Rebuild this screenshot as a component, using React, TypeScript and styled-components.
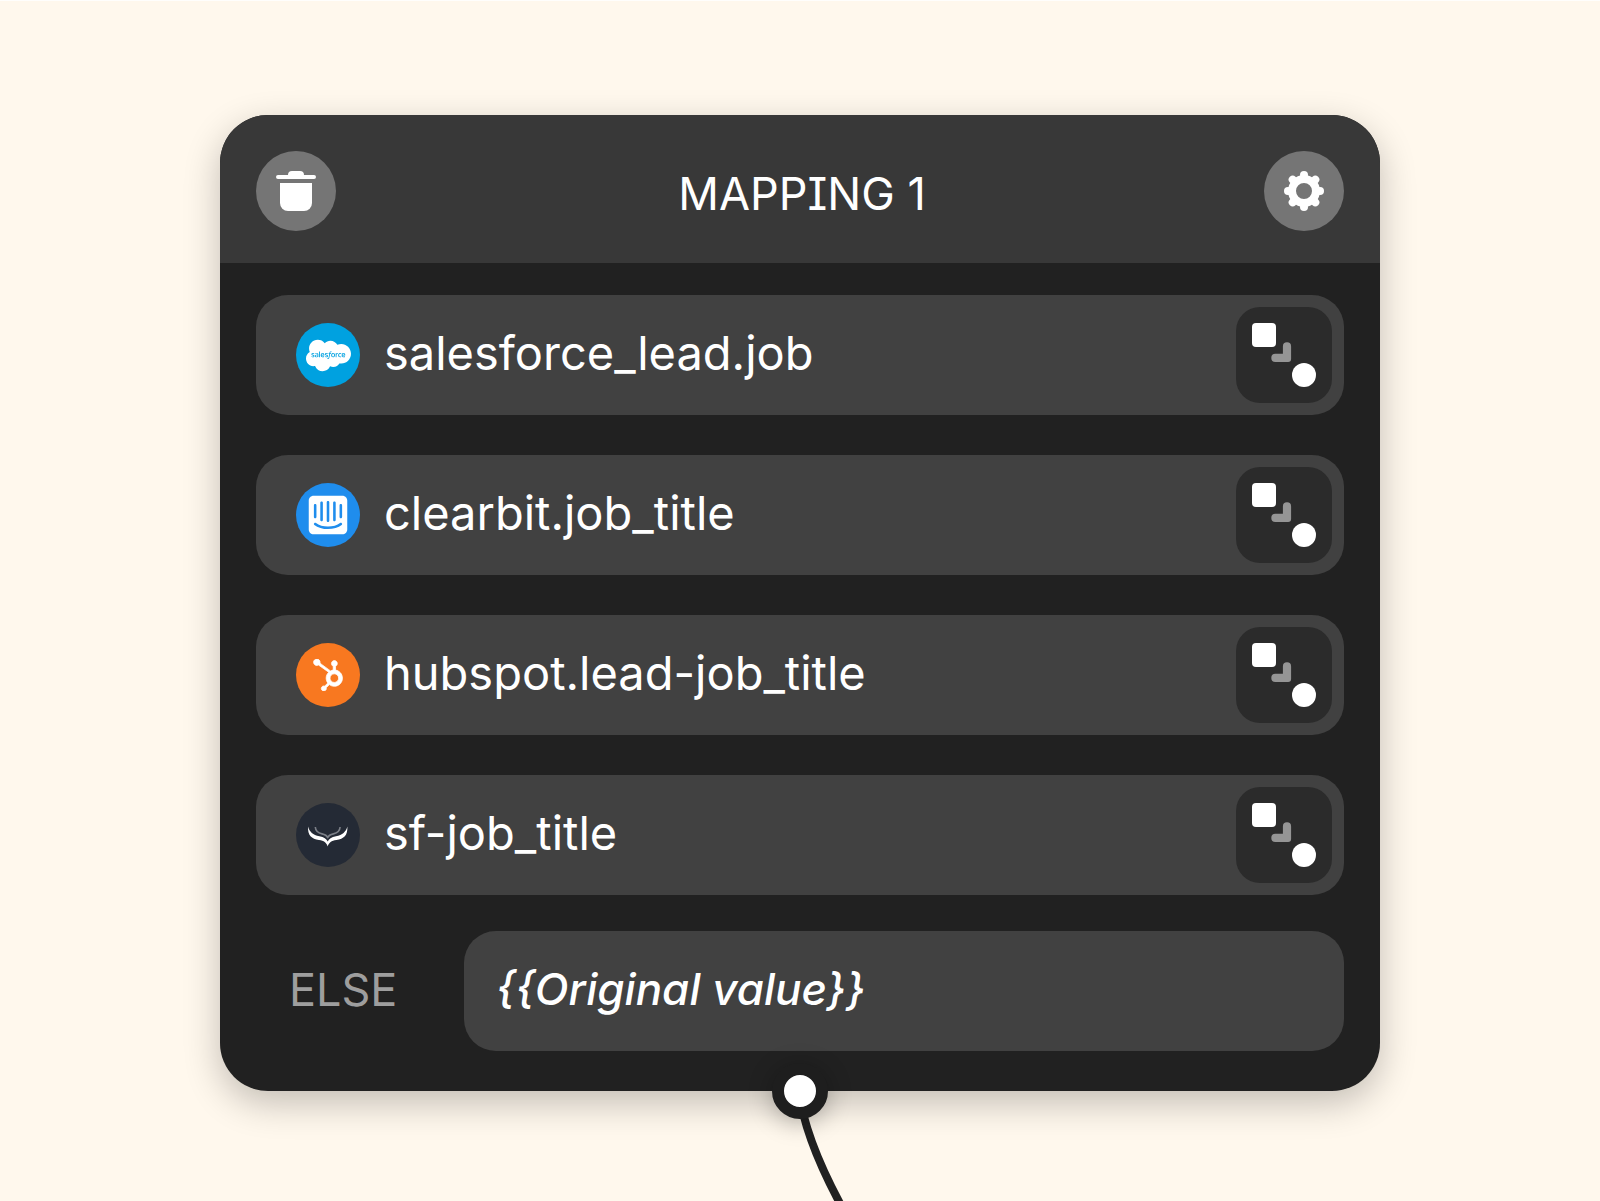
import React from "react";
import styled, { createGlobalStyle } from "styled-components";
import { FaHubspot, FaIntercom, FaSalesforce } from "react-icons/fa";

const GlobalStyle = createGlobalStyle`
  *, *::before, *::after { box-sizing: border-box; }
  body { margin: 0; background: #fff8ed; }
  button, input { font: inherit; color: inherit; }
`;

const Page = styled.main`
  min-height: 100vh;
  display: flex;
  flex-direction: column;
  align-items: center;
  padding: 114px 32px 0;
  border-top: 1px solid #fffefc;
  overflow: hidden;
  color: #fff;
  font-family: Inter, "Liberation Sans", sans-serif;
`;

const Card = styled.section`
  position: relative;
  width: 100%;
  max-width: 1160px;
  border-radius: 48px;
  background: #212121;
  box-shadow: 0 12px 36px rgba(0, 0, 0, 0.24);
`;

const Header = styled.header`
  display: flex;
  align-items: center;
  justify-content: space-between;
  padding: 36px 36px 32px;
  border-radius: 48px 48px 0 0;
  background: #383838;
`;

const Title = styled.h1`
  margin: 0;
  padding: 6px 0 0 4px;
  font-size: 45px;
  line-height: 56px;
  font-weight: 400;
  font-feature-settings: "cv08";
`;

const RoundButton = styled.button`
  display: grid;
  place-items: center;
  width: 80px;
  height: 80px;
  padding: 0;
  border: 0;
  border-radius: 50%;
  background: #757575;
  cursor: pointer;
`;

const Body = styled.div`
  display: flex;
  flex-direction: column;
  gap: 36px;
  padding: 32px 36px 40px;
`;

const SourceList = styled.ul`
  display: flex;
  flex-direction: column;
  gap: 40px;
  margin: 0;
  padding: 0;
  list-style: none;
`;

const SourceRow = styled.li`
  display: flex;
  align-items: center;
  gap: 24px;
  padding: 12px 12px 12px 40px;
  border-radius: 32px;
  background: #414141;
`;

const AppBadge = styled.span<{ $color: string }>`
  display: grid;
  place-items: center;
  flex: none;
  width: 64px;
  height: 64px;
  border-radius: 50%;
  background: ${(p) => p.$color};
`;

const SourceName = styled.span`
  flex: 1;
  padding-bottom: 4px;
  font-size: 47px;
  line-height: 56px;
`;

const MapButton = styled.button`
  width: 96px;
  height: 96px;
  padding: 0;
  border: 0;
  border-radius: 24px;
  background: #2b2b2b;
  cursor: pointer;
  svg { display: block; }
`;

const ElseRow = styled.div`
  display: grid;
  grid-template-columns: 172px 1fr;
  column-gap: 36px;
  align-items: center;
`;

const ElseLabel = styled.label`
  padding: 0 0 2px 33px;
  color: #9e9e9e;
  font-size: 45px;
  line-height: 56px;
`;

const ElseInput = styled.input`
  width: 100%;
  height: 120px;
  padding: 0 32px 4px;
  border: 0;
  border-radius: 32px;
  background: #414141;
  font-size: 44px;
  font-style: italic;
  font-weight: 500;
`;

const OutputNode = styled.span`
  position: absolute;
  left: 50%;
  bottom: 0;
  width: 56px;
  height: 56px;
  border: 12px solid #1e1e1e;
  border-radius: 50%;
  background: #fff;
  box-shadow: 0 4px 24px rgba(0, 0, 0, 0.28);
  transform: translate(-50%, 50%);
`;

const Connector = styled.svg`
  display: block;
  width: 160px;
  height: 110px;
`;

const TrashIcon = () => (
  <svg width="40" height="40" viewBox="0 0 40 40" fill="#fff" aria-hidden="true">
    <path d="M12 4a4 4 0 0 1 4-4h8a4 4 0 0 1 4 4h10a2 2 0 0 1 0 4H2a2 2 0 0 1 0-4z" />
    <path d="M4 12h32v20a8 8 0 0 1-8 8H12a8 8 0 0 1-8-8z" />
  </svg>
);

const teeth = [0, 45, 90, 135, 180, 225, 270, 315];

const GearIcon = () => (
  <svg width="40" height="40" viewBox="0 0 40 40" fill="#fff" aria-hidden="true">
    <circle cx="20" cy="20" r="12" fill="none" stroke="#fff" strokeWidth="8" />
    {teeth.map((angle) => (
      <circle key={angle} cx="20" cy="4" r="4" transform={`rotate(${angle} 20 20)`} />
    ))}
  </svg>
);

const MapIcon = () => (
  <svg width="96" height="96" viewBox="0 0 96 96" aria-hidden="true">
    <rect x="16" y="16" width="24" height="24" rx="4" fill="#fff" />
    <path
      d="M51 35.3a4.1 4.1 0 0 1 4.100 4.100V52a3 3 0 0 1-3 3H39.400a4.100 4.100 0 0 1 0-8.200H46.900v-7.400a4.100 4.100 0 0 1 4.100-4.100z"
      fill="#959595"
    />
    <circle cx="68" cy="68" r="12" fill="#fff" />
  </svg>
);

const HornsIcon = () => (
  <svg width="64" height="64" viewBox="0 0 64 64" aria-hidden="true">
    <path
      d="M12 23.5c-.4 9 3.5 12.3 11 13.5 5 .8 7.5 2.5 8.7 6.5 1.2-4 3.7-5.7 8.7-6.5 7.5-1.2 11.4-4.5 11-13.5-1.6 5.5-4.8 8.3-11.4 9.8-4.5 1-7.2 2.6-8.3 5.1-1.1-2.5-3.8-4.1-8.3-5.1-6.6-1.5-9.8-4.3-11.4-9.8z"
      fill="#fff"
    />
    <path
      d="M19.3 24c.3 4.5 2.5 6 6.7 6.9 3.2.7 4.8 1.6 5.7 3.7.9-2.1 2.5-3 5.7-3.7 4.2-.9 6.4-2.4 6.700-6.900"
      fill="none"
      stroke="#7b7f87"
      strokeWidth="1.6"
      strokeLinejoin="round"
    />
  </svg>
);

const sources = [
  { name: "salesforce_lead.job", color: "#00a1e0", icon: <FaSalesforce size={45} /> },
  { name: "clearbit.job_title", color: "#1f8ded", icon: <FaIntercom size={44} /> },
  {
    name: "hubspot.lead-job_title",
    color: "#f87820",
    icon: <FaHubspot size={32} stroke="#fff" strokeWidth={12} />,
  },
  { name: "sf-job_title", color: "#242a35", icon: <HornsIcon /> },
];

export default function App() {
  return (
    <>
      <GlobalStyle />
      <Page>
        <Card aria-labelledby="mapping-title">
          <Header>
            <RoundButton type="button" aria-label="Delete mapping">
              <TrashIcon />
            </RoundButton>
            <Title id="mapping-title">MAPPING 1</Title>
            <RoundButton type="button" aria-label="Mapping settings">
              <GearIcon />
            </RoundButton>
          </Header>
          <Body>
            <SourceList>
              {sources.map((source) => (
                <SourceRow key={source.name}>
                  <AppBadge $color={source.color}>{source.icon}</AppBadge>
                  <SourceName>{source.name}</SourceName>
                  <MapButton type="button" aria-label={`Map ${source.name}`}>
                    <MapIcon />
                  </MapButton>
                </SourceRow>
              ))}
            </SourceList>
            <ElseRow>
              <ElseLabel htmlFor="fallback">ELSE</ElseLabel>
              <ElseInput id="fallback" defaultValue="{{Original value}}" />
            </ElseRow>
          </Body>
          <OutputNode />
        </Card>
        <Connector viewBox="0 0 160 110" aria-hidden="true">
          <path d="M79 0C83 34 99 74 123 118" fill="none" stroke="#212121" strokeWidth="8" />
        </Connector>
      </Page>
    </>
  );
}
